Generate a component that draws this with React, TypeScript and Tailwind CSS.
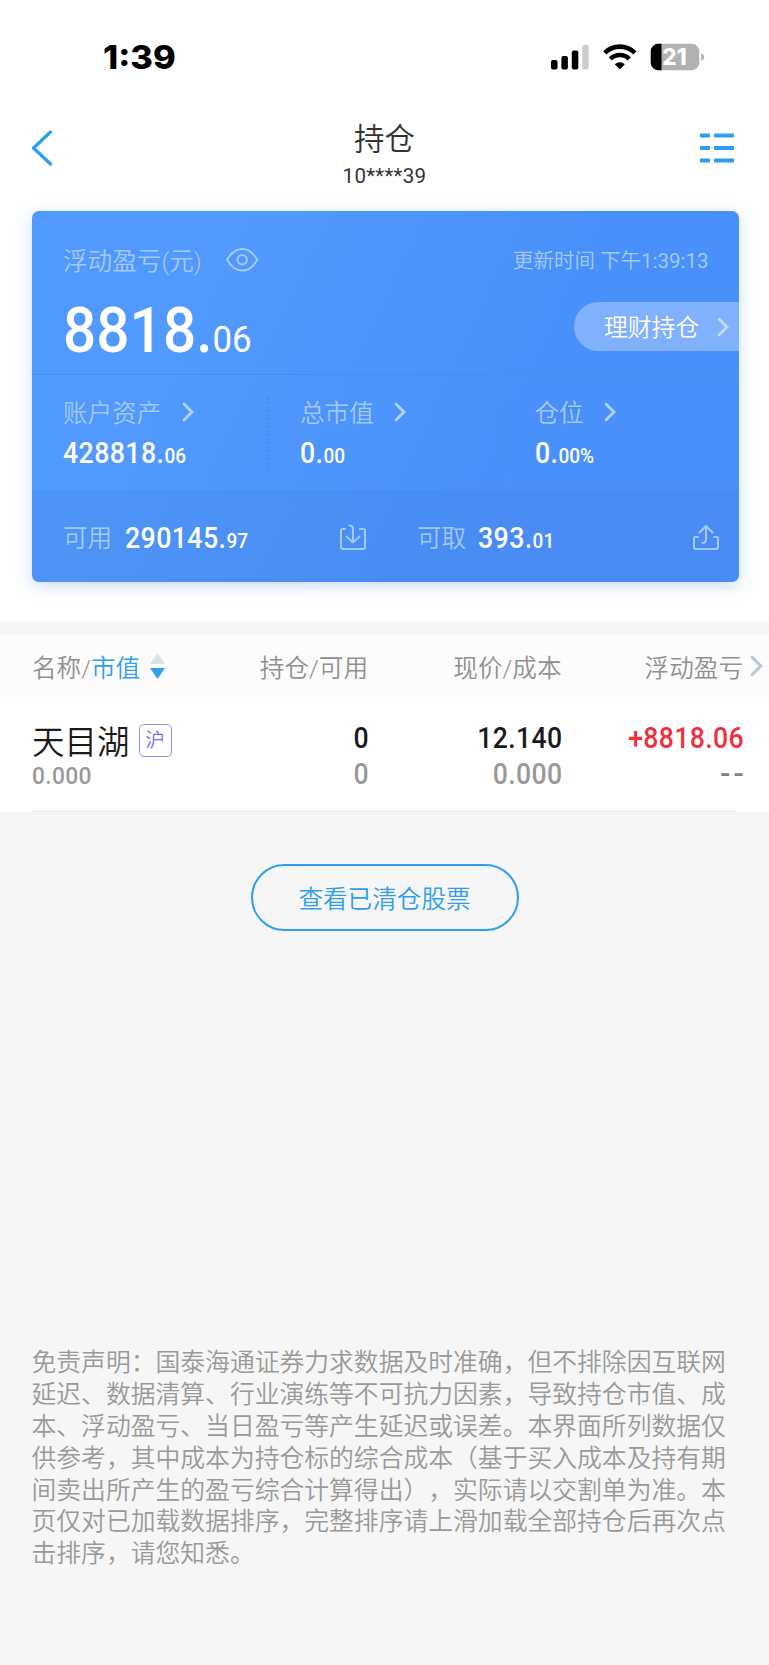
import React from 'react';
import clsx from 'clsx';

const DISCLAIMER = [
  '免责声明：国泰海通证券力求数据及时准确，但不排除因互联网',
  '延迟、数据清算、行业演练等不可抗力因素，导致持仓市值、成',
  '本、浮动盈亏、当日盈亏等产生延迟或误差。本界面所列数据仅',
  '供参考，其中成本为持仓标的综合成本（基于买入成本及持有期',
  '间卖出所产生的盈亏综合计算得出），实际请以交割单为准。本',
  '页仅对已加载数据排序，完整排序请上滑加载全部持仓后再次点',
  '击排序，请您知悉。',
];

function Chevron({ className }: { className?: string }) {
  return (
    <svg viewBox="0 0 12 20" fill="none" stroke="currentColor" className={clsx('shrink-0', className)}>
      <path d="M2 2l8 8-8 8" strokeWidth="2.8" strokeLinecap="round" />
    </svg>
  );
}

function Amount({ value, decimals, className }: { value: string; decimals: string; className?: string }) {
  return (
    <div className={clsx('origin-left scale-x-[0.93] whitespace-nowrap text-[28.8px] leading-[34px] font-medium tracking-[0.4px] text-white', className)}>
      {value}.<span className="text-[20.5px] tracking-normal">{decimals}</span>
    </div>
  );
}

function StatusBar() {
  return (
    <div className="flex h-[114px] items-center pr-[64px] pl-[103px]">
      <div className="mt-[2px] origin-left scale-x-[1.06] font-['Inter'] text-[32.5px] leading-[40px] font-extrabold">1:39</div>
      <svg width="154" height="30" viewBox="0 0 154 30" className="ml-auto">
        <rect x="0" y="18" width="6.5" height="9.5" rx="2" />
        <rect x="10.4" y="14" width="6.5" height="13.5" rx="2" />
        <rect x="20.8" y="8.5" width="6.5" height="19" rx="2" />
        <rect x="31.2" y="3" width="6.5" height="24.5" rx="2" fill="#cccccc" />
        <g fill="none" stroke="black" strokeWidth="4.6">
          <path d="M53.8 10.8a21.3 21.3 0 0 1 30 0" />
          <path d="M59.4 16.9a13.3 13.3 0 0 1 18.8 0" />
        </g>
        <path d="M68.8 27.5l-5-5.2a7.3 7.3 0 0 1 10 0z" />
        <clipPath id="battery">
          <rect x="99.5" y="1.5" width="49" height="27" rx="8.5" />
        </clipPath>
        <g clipPath="url(#battery)">
          <rect x="99.5" y="1.5" width="49" height="27" fill="#b1b1b1" />
          <rect x="99.5" y="1.5" width="11" height="27" />
        </g>
        <path d="M150.2 11.5c4 1 4 6 0 7z" fill="#b1b1b1" />
        <text x="123.5" y="23" textAnchor="middle" fill="white" fontFamily="Inter" fontWeight="800" fontSize="22.5">21</text>
      </svg>
    </div>
  );
}

function NavBar() {
  return (
    <div className="flex h-[97px] items-start justify-between pr-[35px] pl-[31px]">
      <svg width="38" height="38" viewBox="0 0 38 38" fill="none" stroke="#2f9eee" strokeWidth="3.4" strokeLinecap="round" strokeLinejoin="round" className="mt-[15px]">
        <path d="M19.5 3L2.5 19l17 16" />
      </svg>
      <div className="flex flex-col items-center text-[#333333]">
        <div className="mt-[6px] text-[30.5px] leading-[40px] font-[350]">持仓</div>
        <div className="text-[20.5px] leading-[32px] tracking-[0.3px]">10****39</div>
      </div>
      <svg width="34" height="32" viewBox="0 0 34 32" fill="#2f9eee" className="mt-[17px]">
        {[2.4, 15, 27.6].map((y) => (
          <g key={y}>
            <rect x="0" y={y} width="10" height="4" rx="0.8" />
            <rect x="14" y={y} width="20" height="4" rx="0.8" />
          </g>
        ))}
      </svg>
    </div>
  );
}

const STATS = [
  { label: '账户资产', value: '428818', decimals: '06', gap: 'gap-[21px]' },
  { label: '总市值', value: '0', decimals: '00', gap: 'gap-[20px]' },
  { label: '仓位', value: '0', decimals: '00%', gap: 'gap-[20px]' },
];

function AssetCard() {
  return (
    <div className="ml-[31.5px] flex h-[371px] w-[707.5px] flex-col overflow-hidden rounded-[7px] bg-linear-115 from-[#5199fc] from-25% to-[#4a90fa] to-65% shadow-[0_4px_16px_rgba(74,144,250,0.3)]">
      <div className="h-[164px] border-b border-[#478cee] pl-[31.5px]">
        <div className="flex h-[75px] items-center pt-[26px] pr-[30.5px] text-[#a4c9fd]">
          <div className="text-[24.6px] leading-[36px] font-[350]">浮动盈亏(元)</div>
          <svg width="34" height="26" viewBox="0 0 34 26" fill="none" stroke="currentColor" strokeWidth="2" className="-mt-[3px] ml-[23px]">
            <path d="M2 12.8C6.5 5 11.5 2 17.2 2s10.7 3 15 10.8C28 20.5 23 23.6 17.2 23.6S6.5 20.5 2 12.8z" />
            <circle cx="17.2" cy="12.8" r="4.7" />
          </svg>
          <div className="-mt-px ml-auto text-[20.5px] leading-[36px] font-[350]">
            更新时间 下午<span className="font-normal">1:39:13</span>
          </div>
        </div>
        <div className="flex items-start justify-between">
          <div className="mt-[7px] origin-left scale-x-[0.93] text-[63px] leading-[76px] font-medium whitespace-nowrap text-white">
            8818.<span className="text-[37.5px] font-normal">06</span>
          </div>
          <div className="mt-[16px] flex h-[49px] w-[165px] items-center rounded-l-full bg-[#81b1fc] pl-[30px] text-white">
            <span className="pt-[5px] text-[23.8px] font-[350]">理财持仓</span>
            <Chevron className="ml-[18px] h-[20px] w-[12px] text-[#c9defe]" />
          </div>
        </div>
      </div>

      <div className="grid h-[115px] grid-cols-[237px_236px_1fr] pt-[23px]">
        {STATS.map((s, i) => (
          <div key={s.label} className={clsx('h-[70px]', i < 2 && 'border-r-2 border-dotted border-[#478bee]', i === 2 ? 'pl-[30px]' : 'pl-[31.5px]')}>
            <div className={clsx('flex h-[32px] items-center pt-px text-[24.6px] font-[350] text-[#a4c9fd]', s.gap)}>
              {s.label}
              <Chevron className="-mt-[6px] h-[20px] w-[12px] text-[#b4d3fe]" />
            </div>
            <Amount value={s.value} decimals={s.decimals} className="mt-[6px]" />
          </div>
        ))}
      </div>

      <div className="flex grow items-center bg-[#3a7cd5]/15 pt-[7px] pl-[31.5px] text-[24.6px] font-[350] whitespace-nowrap text-[#a4c9fd]">
        <div className="w-[49px]">可用</div>
        <Amount value="290145" decimals="97" className="ml-[13px] w-[214px]" />
        <svg width="28" height="28" viewBox="0 0 28 28" fill="none" stroke="currentColor" strokeWidth="2" strokeLinecap="round" strokeLinejoin="round" className="-mt-[4px]">
          <path d="M6 5H3.5Q2 5 2 6.5V23q0 2 2 2h20q2 0 2-2V6.5Q26 5 24.5 5H21" />
          <path d="M10.5 1.500q3.500 0 3.500 4V18.500M7.500 12.500l6.500 6 6.500-6" />
        </svg>
        <div className="ml-[50px] w-[49px]">可取</div>
        <Amount value="393" decimals="01" className="ml-[12px] w-[214px]" />
        <svg width="28" height="28" viewBox="0 0 28 28" fill="none" stroke="currentColor" strokeWidth="2" strokeLinecap="round" strokeLinejoin="round" className="-mt-[4px]">
          <path d="M6 13H3.5Q2 13 2 14.5V23q0 2 2 2h20q2 0 2-2v-8.5Q26 13 24.5 13H22" />
          <path d="M10.5 19q3.5 0 3.5-4V2.5M7.500 8.500L14 2l6.500 6.500" />
        </svg>
      </div>
    </div>
  );
}

const COLUMNS = [
  { top: '0', bottom: '0', width: 'w-[196px]' },
  { top: '12.140', bottom: '0.000', width: 'w-[193.5px]' },
  { top: '+8818.06', bottom: '--', width: 'w-[181px]', color: 'text-[#f0303c]' },
];

function Holdings() {
  return (
    <div>
      <div className="flex h-[62px] items-center bg-[#fcfcfc] pt-[6px] pl-[32px] text-[24.6px] font-[350] text-[#909090]">
        <div className="flex w-[141px] items-center whitespace-nowrap">
          名称/<span className="text-[#2f9eee]">市值</span>
          <svg width="15" height="26" viewBox="0 0 15 26" className="-mt-[5px] ml-[10px] shrink-0">
            <path d="M7.5 0L15 11H0z" fill="#dbe3ea" />
            <path d="M7.5 26L15 15H0z" fill="#2f9eee" />
          </svg>
        </div>
        <div className="w-[195px] text-right">持仓/可用</div>
        <div className="w-[193.5px] text-right">现价/成本</div>
        <div className="w-[181.5px] text-right">浮动盈亏</div>
        <Chevron className="-mt-[7px] ml-[7px] h-[22px] w-[13px] text-[#b8c9dc]" />
      </div>

      <div className="flex h-[115px] bg-white pl-[32px]">
        <div className="w-[141px]">
          <div className="mt-[26px] flex h-[40px] items-center text-[32.5px] font-[350] text-[#1a1a1a]">
            <span className="whitespace-nowrap">天目湖</span>
            <span className="-mt-[5px] ml-[9px] flex h-[33px] w-[33px] shrink-0 items-center justify-center rounded-[5px] border border-[#8f8ff0] text-[19.5px] text-[#6f6ff0]">沪</span>
          </div>
          <div className="-mt-px origin-left scale-x-[0.94] text-[24.3px] leading-[28px] font-medium tracking-[0.3px] text-[#999999]">0.000</div>
        </div>
        {COLUMNS.map((c) => (
          <div key={c.top} className={clsx('origin-right scale-x-[0.93] pt-[24px] text-right text-[28.6px] leading-[35.5px] font-medium tracking-[0.4px]', c.width)}>
            <div className={c.color ?? 'text-[#1a1a1a]'}>{c.top}</div>
            {c.bottom === '--' ? (
              <div className="tracking-[3px] text-[#808080] -mr-[3px]">
                <span className="inline-block origin-right scale-x-[1.15]">{c.bottom}</span>
              </div>
            ) : (
              <div className="text-[#999999]">{c.bottom}</div>
            )}
          </div>
        ))}
      </div>
      <div className="-mt-px mr-[32px] ml-[31px] h-px bg-[#e8e8e8]" />
    </div>
  );
}

export default function App() {
  return (
    <div className="flex h-[1665px] w-[769px] flex-col bg-[#f6f6f6] font-['Roboto','Noto_Sans_CJK_SC',sans-serif] text-black">
      <div className="h-[621px] bg-white">
        <StatusBar />
        <NavBar />
        <AssetCard />
      </div>
      <div className="h-[14px] shrink-0" />
      <Holdings />

      <button className="mt-[52px] flex h-[67px] w-[268px] items-center justify-center self-center rounded-[38px] border-2 border-[#2f9eee] pt-[6px] text-[24.6px] font-[350] text-[#2f9eee]">
        查看已清仓股票
      </button>

      <div className="mt-auto mb-[95px] ml-[31.5px] text-[24.8px] leading-[31.8px] font-[350] whitespace-nowrap text-[#999999] [text-spacing-trim:space-all]">
        {DISCLAIMER.map((line) => (
          <p key={line}>{line}</p>
        ))}
      </div>
    </div>
  );
}
